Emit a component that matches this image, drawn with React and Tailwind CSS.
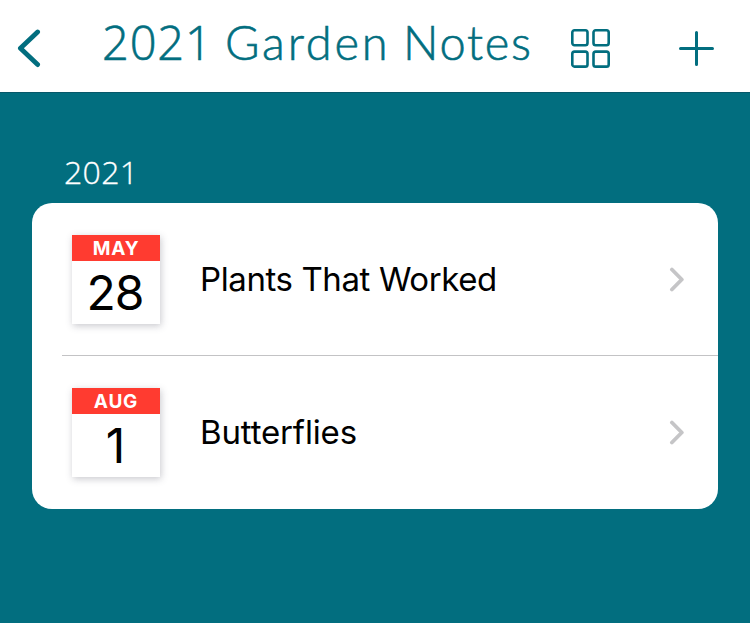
const notes = [
  { month: 'MAY', day: '28', title: 'Plants That Worked', titleClass: 'tracking-[-0.4px]' },
  { month: 'AUG', day: '1', title: 'Butterflies', titleClass: 'tracking-[-0.15px]' },
];

function BackIcon() {
  return (
    <svg className="mt-[29px] ml-[17px] h-[39px] w-[24px] shrink-0" viewBox="0 0 24 39" fill="none" stroke="currentColor" strokeWidth="4.8" strokeLinecap="round" strokeLinejoin="round">
      <path d="M20.6 3 3.4 19.3l17.2 16.3" />
    </svg>
  );
}

function GridIcon() {
  return (
    <svg className="mt-[28px] h-[41px] w-[41px] shrink-0" viewBox="0 0 41 41" fill="none" stroke="currentColor" strokeWidth="2.6">
      <rect x="2.3" y="2.3" width="15.2" height="15" rx="2.2" />
      <rect x="23.5" y="2.3" width="15.2" height="15" rx="2.2" />
      <rect x="2.3" y="23.6" width="15.2" height="15" rx="2.2" />
      <rect x="23.5" y="23.6" width="15.2" height="15" rx="2.2" />
    </svg>
  );
}

function PlusIcon() {
  return (
    <svg className="mt-[31px] ml-[68px] h-[35px] w-[36px] shrink-0" viewBox="0 0 36 35" fill="none" stroke="currentColor" strokeWidth="3" strokeLinecap="round">
      <path d="M1.5 17.5h32M17.5 1.5v32" />
    </svg>
  );
}

function Chevron() {
  return (
    <svg className="mr-[33px] h-[25px] w-[16px] shrink-0" viewBox="0 0 16 25" fill="none" stroke="#c5c5c7" strokeWidth="3.8" strokeLinecap="round" strokeLinejoin="round">
      <path d="M2.9 2.5l9.9 10-9.9 10" />
    </svg>
  );
}

function DateTile({ month, day }) {
  return (
    <div className="h-[89px] w-[88px] shrink-0 bg-white text-center shadow-[1px_2px_7px_rgba(60,60,80,0.28)]">
      <div className="h-[26px] bg-[#ff3b30] text-[19px] leading-[28px] font-bold tracking-[0.8px] text-white">{month}</div>
      <div className="h-[63px] pr-[2px] text-[48px] leading-[64px] tracking-[-1px]">{day}</div>
    </div>
  );
}

export default function App() {
  return (
    <div className="flex h-[623px] w-[750px] flex-col overflow-hidden bg-[#026e7f] font-['Inter',sans-serif] text-black">
      <header className="flex h-[93px] shrink-0 border-b border-[#07586a] bg-white text-[#026e7f]">
        <BackIcon />
        <h1 className="mt-[12px] ml-[61px] flex w-[468px] shrink-0 items-baseline text-[47px] leading-[60px] font-light whitespace-nowrap [-webkit-text-stroke:0.6px_currentColor]">
          <span className="w-[123px] font-['Open_Sans',sans-serif] tracking-[0.8px]">2021 </span>
          <span className="w-[178px] font-['Lato',sans-serif] tracking-[2.8px]">Garden </span>
          <span className="font-['Lato',sans-serif] tracking-[1.7px]">Notes</span>
        </h1>
        <GridIcon />
        <PlusIcon />
      </header>
      <main className="px-8">
        <h2 className="mt-[59px] ml-[32px] h-[51px] font-['Open_Sans',sans-serif] text-[32px] leading-[39px] font-light tracking-[0.3px] text-white [-webkit-text-stroke:0.3px_currentColor]">2021</h2>
        <ul className="h-[306px] overflow-hidden rounded-[20px] bg-white">
          {notes.map((note, i) => (
            <li key={note.title} className="h-[153px] pl-[30px]">
              <div className={i === 0 ? 'flex h-[153px] items-center border-b border-[#c3c3c5] pl-[10px]' : 'flex h-[152px] items-center pl-[10px]'}>
                <DateTile month={note.month} day={note.day} />
                <span className={`ml-[40px] flex-1 text-[33px] leading-[40px] whitespace-nowrap ${note.titleClass}`}>{note.title}</span>
                <Chevron />
              </div>
            </li>
          ))}
        </ul>
      </main>
    </div>
  );
}
